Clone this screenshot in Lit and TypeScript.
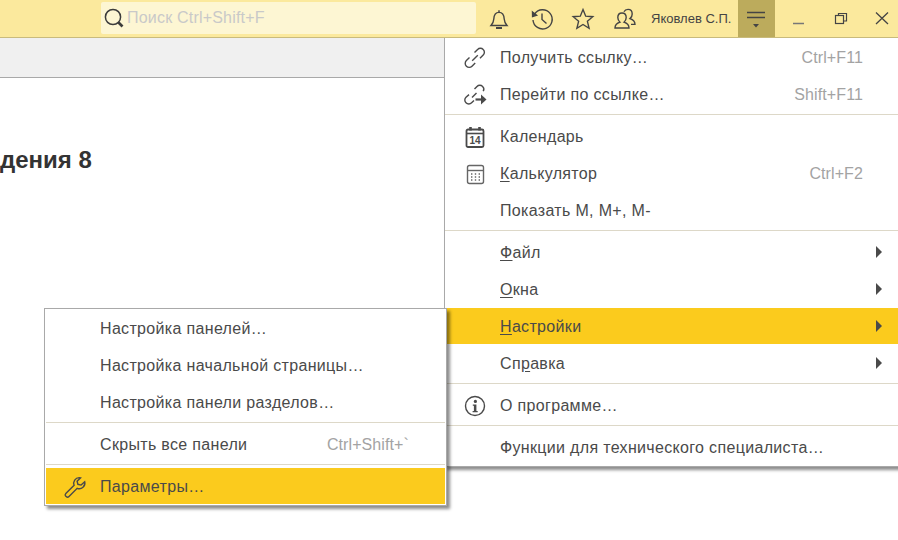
import { css, html, LitElement, svg } from 'lit';
import { customElement } from 'lit/decorators.js';

interface MenuRow {
  label: unknown;
  icon?: unknown;
  hotkey?: string;
  submenu?: boolean;
  active?: boolean;
  separator?: boolean;
}

const linkIcon = svg`<path d="M9.2 14.8 14.8 9.2" /><path d="M11.5 6.5 14.6 3.4a3.9 3.9 0 0 1 5.6 0 3.9 3.9 0 0 1 0 5.6L17 12.2" /><path d="M12.2 17 9 20.2a3.9 3.9 0 0 1-5.6 0 3.9 3.9 0 0 1 0-5.6L6.5 11.5" />`;
const goLinkIcon = svg`<path d="M9 14.5 13.5 10" /><path d="M11.5 6 14 3.4a3.9 3.9 0 0 1 5.6 0 3.9 3.9 0 0 1 .6 4.8" /><path d="M11 17.4 8.6 19.8a3.9 3.9 0 0 1-5.6 0 3.9 3.9 0 0 1 0-5.6L6 11.6" /><path d="M12.5 16.5h7" stroke-width="2.2" /><path d="M18 11.5 23.5 16.5 18 21.5Z" fill="#4a4a4a" stroke="none" />`;
const calendarIcon = svg`<rect x="3.5" y="4.5" width="17" height="17.5" rx="1.5" stroke-width="1.8" /><path d="M3.5 8.5h17" stroke-width="1.6" /><path d="M7.5 2v3.5M16.5 2v3.5" stroke-width="2.6" /><text x="12" y="19" text-anchor="middle" font-family="Liberation Sans" font-weight="700" font-size="10" fill="#4a4a4a" stroke="none">14</text>`;
const calcIcon = svg`<rect x="4.5" y="3.5" width="16" height="18" rx="2" stroke="#666" /><path d="M4.5 8.5h16" stroke="#666" /><path d="M8 12h1.4M11.8 12h1.4M15.6 12h1.4M8 15h1.4M11.8 15h1.4M15.6 15h1.4M8 18h1.4M11.8 18h1.4M15.6 18h1.4" stroke="#666" />`;
const infoIcon = svg`<circle cx="12" cy="12" r="9.5" /><circle cx="12.4" cy="7.4" r="1.6" fill="#4a4a4a" stroke="none" /><path d="M9.8 10.6h3.6v6.4h1.3v1.3H9.6V17h1.3v-5.2H9.8Z" fill="#4a4a4a" stroke="none" />`;
const wrenchIcon = svg`<path d="M16.2 2.6a5.6 5.6 0 0 0-5.1 7.6L2.8 18.4a2 2 0 0 0 0 2.8l.4.4a2 2 0 0 0 2.8 0l8.2-8.3a5.6 5.6 0 0 0 7.5-6.6l-3.6 3.4-3.2-.8-.8-3.1 3.5-3.4a5.6 5.6 0 0 0-1.4-.2Z" />`;

const mainRows: MenuRow[] = [
  { label: 'Получить ссылку…', icon: linkIcon, hotkey: 'Ctrl+F11' },
  { label: 'Перейти по ссылке…', icon: goLinkIcon, hotkey: 'Shift+F11', separator: true },
  { label: html`Кален<u>д</u>арь`, icon: calendarIcon },
  { label: html`<u>К</u>алькулятор`, icon: calcIcon, hotkey: 'Ctrl+F2' },
  { label: 'Показать M, M+, M-', separator: true },
  { label: html`<u>Ф</u>айл`, submenu: true },
  { label: html`<u>О</u>кна`, submenu: true },
  { label: html`<u>Н</u>астройки`, submenu: true, active: true },
  { label: html`Сп<u>р</u>авка`, submenu: true, separator: true },
  { label: 'О программе…', icon: infoIcon, separator: true },
  { label: 'Функции для технического специалиста…' },
];

const settingsRows: MenuRow[] = [
  { label: 'Настройка панелей…' },
  { label: 'Настройка начальной страницы…' },
  { label: 'Настройка панели разделов…', separator: true },
  { label: 'Скрыть все панели', hotkey: 'Ctrl+Shift+`', separator: true },
  { label: 'Параметры…', icon: wrenchIcon, active: true },
];

@customElement('app-root')
export class AppRoot extends LitElement {
  static styles = css`
    :host {
      display: block;
      position: relative;
      width: 898px;
      height: 540px;
      overflow: hidden;
      background: #fff;
      font-family: "Liberation Sans", Arial, sans-serif;
      font-size: 16px;
      color: #4a4a4a;
    }
    .header {
      display: flex;
      align-items: stretch;
      height: 37px;
      background: #fbe99d;
      border-bottom: 1px solid #c9bb7d;
    }
    .search {
      display: flex;
      align-items: center;
      gap: 2px;
      flex: none;
      box-sizing: border-box;
      width: 375px;
      height: 32px;
      margin: 2px 0 0 101px;
      padding-left: 2px;
      border-radius: 2px;
      background: #fdf6d3;
      color: #c9c9c9;
      letter-spacing: 0.2px;
    }
    .tools {
      display: flex;
      align-items: center;
      flex: 1;
    }
    .tool {
      display: flex;
      align-items: center;
      justify-content: center;
      flex: none;
      width: 37px;
      height: 37px;
    }
    .tool svg {
      width: 24px;
      height: 24px;
      fill: none;
      stroke: #444;
      stroke-width: 1.4;
    }
    .bell { margin-left: 4.5px; }
    .history { margin-left: 6px; }
    .star { margin-left: 4px; }
    .users { margin-left: 5px; }
    .user {
      flex: none;
      margin-left: 7.5px;
      width: 87px;
      font-size: 13px;
      white-space: nowrap;
      color: #444;
    }
    .burger {
      flex: none;
      width: 37px;
      height: 37px;
      background: #bcab5c;
    }
    .burger svg, .win svg {
      display: block;
      width: 100%;
      height: 37px;
      fill: none;
      stroke: #444;
      stroke-width: 1.2;
    }
    .win {
      flex: none;
      width: 47px;
      height: 37px;
    }
    .win.restore { width: 44px; }
    .win.close { width: 32px; }
    .strip {
      height: 39px;
      background: #f0f0f0;
      border-bottom: 1px solid #a9a9a9;
    }
    .title {
      margin: 67px 0 0 0;
      font-size: 24px;
      font-weight: 700;
      line-height: 30px;
      color: #333;
      white-space: nowrap;
    }
    .menu {
      position: absolute;
      box-sizing: border-box;
      background: #fff;
      border: 1px solid #a9a9a9;
      box-shadow: 3px 3px 3px rgba(0, 0, 0, 0.45);
    }
    .main {
      left: 444px;
      top: 38px;
      width: 458px;
      height: 429px;
      padding-top: 1px;
      border-top: none;
    }
    .settings {
      left: 44px;
      top: 308px;
      width: 403px;
      height: 198px;
      padding: 1px;
    }
    .row {
      display: flex;
      align-items: center;
      height: 37px;
      white-space: nowrap;
    }
    .row.active {
      box-sizing: border-box;
      height: 36px;
      padding-top: 1px;
      margin-bottom: 1px;
      background: #fbcb1d;
    }
    .sep {
      height: 1px;
      margin: 1px 0 3px 0;
      background: #ddd8c8;
    }
    .icon {
      display: flex;
      justify-content: center;
      flex: none;
      box-sizing: border-box;
      width: 55px;
      padding-left: 4px;
    }
    .settings .icon {
      width: 54px;
      padding-left: 3px;
    }
    .icon svg {
      width: 24px;
      height: 24px;
      fill: none;
      stroke: #4a4a4a;
      stroke-width: 1.4;
    }
    .label {
      flex: 1;
      letter-spacing: 0.33px;
    }
    .hotkey {
      color: #a3a3a3;
      margin-right: 38px;
      letter-spacing: 0.1px;
    }
    .settings .hotkey { margin-right: 36px; }
    .arrow {
      width: 0;
      height: 0;
      margin: -2px 19px 0 0;
      border-left: 6px solid #4a4a4a;
      border-top: 6px solid transparent;
      border-bottom: 6px solid transparent;
    }
    u { text-underline-offset: 2px; }
  `;

  private _renderRow(row: MenuRow) {
    return html`
      <div class="row ${row.active ? 'active' : ''}">
        <span class="icon">${row.icon ? html`<svg viewBox="0 0 24 24">${row.icon}</svg>` : ''}</span>
        <span class="label">${row.label}</span>
        ${row.hotkey ? html`<span class="hotkey">${row.hotkey}</span>` : ''}
        ${row.submenu ? html`<span class="arrow"></span>` : ''}
      </div>
      ${row.separator ? html`<div class="sep"></div>` : ''}
    `;
  }

  render() {
    return html`
      <div class="header">
        <div class="search">
          <svg width="22" height="22" viewBox="0 0 22 22" fill="none" stroke="#3c3c3c">
            <circle cx="10" cy="10" r="7.6" stroke-width="1.5" />
            <path d="M15.5 15.5 19.5 19.5" stroke-width="2.6" />
          </svg>
          <span>Поиск Ctrl+Shift+F</span>
        </div>
        <div class="tools">
          <span class="tool bell">
            <svg viewBox="0 0 24 24">
              <path d="M4 18.5c1.6-1.8 2.6-3.2 2.8-6.5.2-3.6 1.8-6.6 5.2-6.6s5 3 5.2 6.6c.2 3.3 1.2 4.7 2.8 6.5Z" />
              <path d="M12 5.4V3.2" />
              <path d="M9 21h6" stroke-width="2" />
            </svg>
          </span>
          <span class="tool history">
            <svg viewBox="0 0 24 24">
              <path d="M4.6 7A9.6 9.6 0 1 1 3 13" />
              <path d="M2.5 5 6.6 8.2 2.6 9.5Z" fill="#444" />
              <path d="M12 6.5V12.5L16.5 16.5" />
            </svg>
          </span>
          <span class="tool star">
            <svg viewBox="0 0 24 24">
              <path d="M12 2.6 14.7 9.2 21.8 9.7 16.4 14.3 18.1 21.3 12 17.5 5.9 21.3 7.6 14.3 2.2 9.7 9.3 9.2Z" />
            </svg>
          </span>
          <span class="tool users">
            <svg viewBox="0 0 24 24">
              <path d="M2 21c0-3.4 2-4.8 5-5.8-1.6-1.4-2.2-3-2.2-4.7C4.8 7.6 6.6 6 9 6s4.2 1.6 4.2 4.5c0 1.7-.6 3.3-2.2 4.7 3 1 5 2.4 5 5.8Z" />
              <path d="M11 4.8C11.8 3.2 13.2 2.4 15 2.4c2.4 0 4.2 1.6 4.2 4.5 0 1.7-.6 3.3-2.2 4.7 3 1 5 2.4 5 5.8h-4" />
            </svg>
          </span>
          <span class="user">Яковлев С.П.</span>
          <span class="burger">
            <svg viewBox="0 0 37 37">
              <path d="M9 12.5h18M9 17.5h18" stroke-width="1.4" />
              <path d="M15 24h6l-3 3.5Z" fill="#444" stroke="none" />
            </svg>
          </span>
          <span class="win">
            <svg viewBox="0 0 47 37"><path d="M18 23.5h11" stroke="#777" stroke-width="1.5" /></svg>
          </span>
          <span class="win restore">
            <svg viewBox="0 0 44 37">
              <rect x="13.5" y="15.5" width="8" height="8" />
              <path d="M16.5 15V13.5h8V21H22" />
            </svg>
          </span>
          <span class="win close">
            <svg viewBox="0 0 32 37"><path d="M10 12.5 22 24M22 12.5 10 24" stroke-width="1.3" /></svg>
          </span>
        </div>
      </div>
      <div class="strip"></div>
      <div class="title">дения 8</div>
      <div class="menu main">${mainRows.map(r => this._renderRow(r))}</div>
      <div class="menu settings">${settingsRows.map(r => this._renderRow(r))}</div>
    `;
  }
}
